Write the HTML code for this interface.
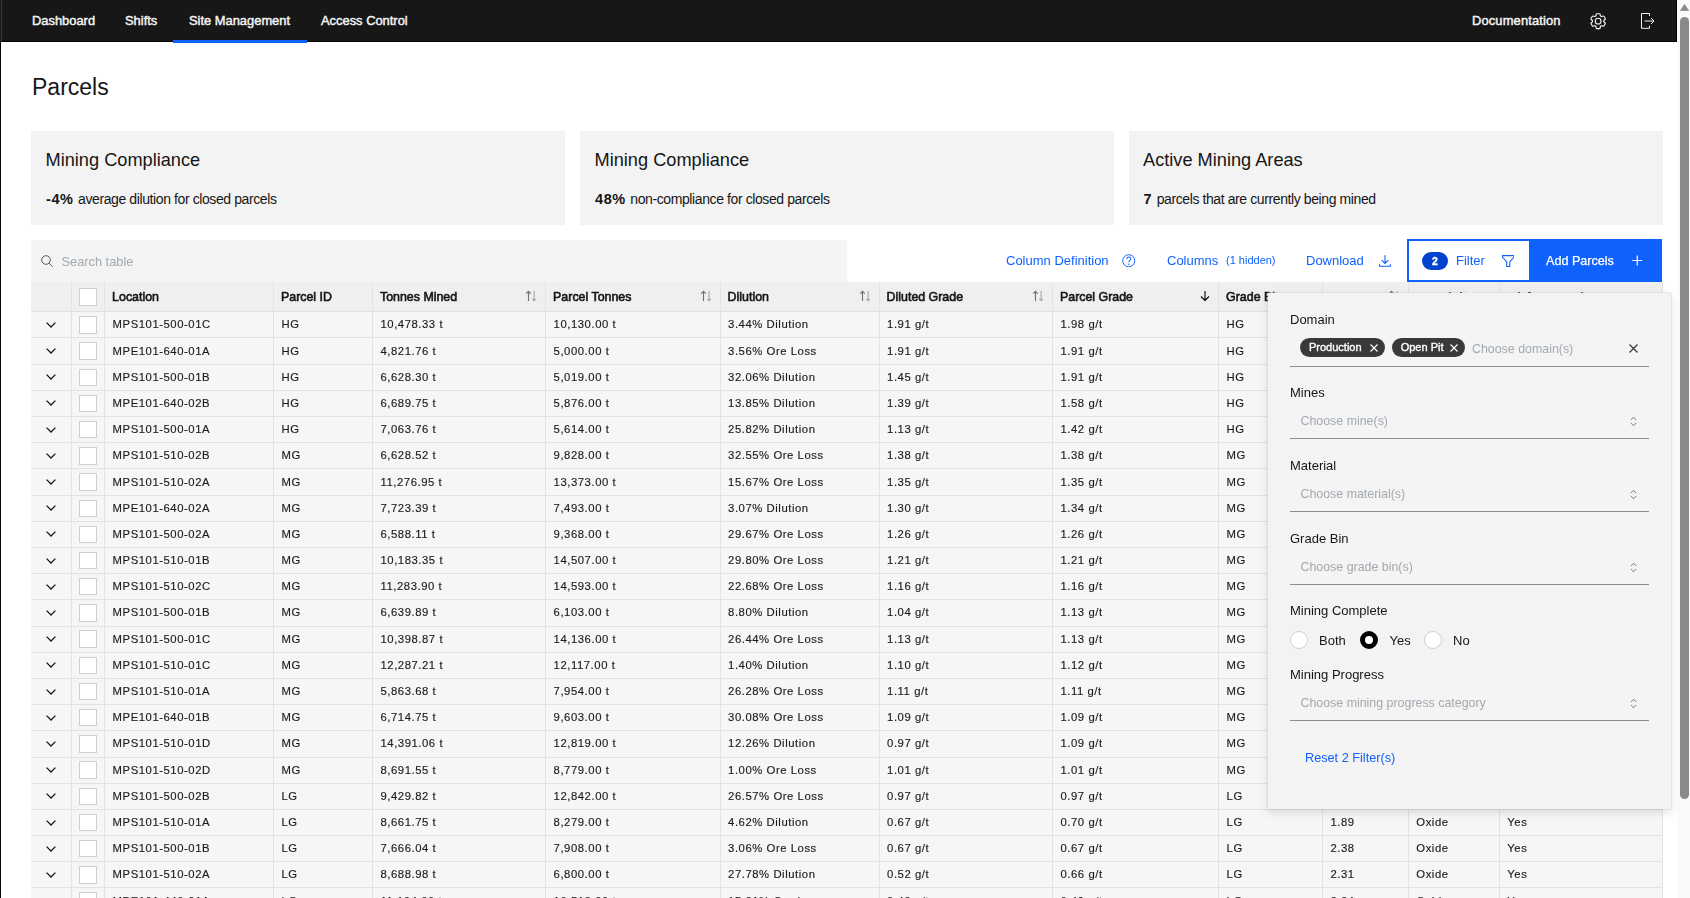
<!DOCTYPE html>
<html><head><meta charset="utf-8"><title>Parcels</title>
<style>
*{box-sizing:border-box;margin:0;padding:0}
html,body{width:1690px;height:898px;overflow:hidden;background:#fff;font-family:"Liberation Sans",sans-serif;color:#161616}
.abs,.vl,.hl,.th,.td,.cb,.chev,.sort,.thead,.tbody{position:absolute}
#leftline{position:absolute;left:0;top:41px;width:1px;height:857px;background:#060606;z-index:5}
#hdrleft{position:absolute;left:1px;top:0;width:1px;height:41px;background:#383838}
#hdrbot{position:absolute;left:0;top:41px;width:1677px;height:1px;background:#030303}
#hdr{position:absolute;left:0;top:0;width:1677px;height:42px;background:#171717}
#hdr .nav{position:absolute;top:0;height:42px;line-height:42px;font-size:12.9px;font-weight:400;-webkit-text-stroke:0.45px #f4f4f4;color:#f4f4f4;white-space:nowrap}
#underline{position:absolute;left:173px;top:39.5px;width:134px;height:3px;background:#0f62fe}
#hdrline{position:absolute;left:1676px;top:0;width:1px;height:42px;background:#000}
#sb{position:absolute;left:1677px;top:0;width:13px;height:898px;background:#fafafa}
#thumb{position:absolute;left:1680px;top:17px;width:9px;height:782px;background:#8a8a8a;border-radius:4.5px}
#title{position:absolute;left:32px;top:72px;font-size:23px;line-height:30px;white-space:nowrap}
.card{position:absolute;top:131px;height:94px;width:534px;background:#f3f3f3}
.card .t{position:absolute;left:14.5px;top:18px;font-size:18.2px;line-height:22px;white-space:nowrap}
.card .s{position:absolute;left:15px;top:59px;font-size:14px;letter-spacing:-0.4px;line-height:18px;white-space:nowrap}
.card .s b{font-weight:700;font-size:14.5px;letter-spacing:0.6px;margin-right:1px}
#search{position:absolute;left:31px;top:240px;width:816px;height:42px;background:#f4f4f4}
#search .ph{position:absolute;left:30.5px;top:13.7px;font-size:12.8px;line-height:16px;color:#a2a9b0}
.link{position:absolute;top:253px;font-size:13px;line-height:16px;color:#0f62fe;white-space:nowrap}
#filterbtn{position:absolute;left:1407px;top:239px;width:124px;height:43px;border:2px solid #0f62fe;background:#fff}
#badge{position:absolute;left:1422px;top:252px;width:26px;height:18px;border-radius:9px;background:#0043ce;color:#fff;font-size:10.5px;font-weight:700;-webkit-text-stroke:0.3px #fff;line-height:18.5px;text-align:center}
#addbtn{position:absolute;left:1529px;top:239px;width:133px;height:43px;background:#0f62fe}
.thead{background:#efefef}
.tbody{background:#f6f6f6}
.vl{width:1px;background:#e2e2e2}
.hl{height:1px;background:#e2e2e2}
.th{top:289px;font-size:12.4px;line-height:16px;font-weight:400;-webkit-text-stroke:0.6px #161616;color:#161616;white-space:nowrap}
.td{font-size:11.3px;letter-spacing:0.55px;line-height:16px;margin-top:-8px;color:#1c1c1c;-webkit-text-stroke:0.15px #1c1c1c;white-space:nowrap}
.cb{width:17.4px;height:17.4px;border:1px solid #c8d0d8;background:#fff}
.chev svg,.sort svg{display:block}
#panel{position:absolute;left:1267.5px;top:293px;width:403.5px;height:516px;background:#f3f3f3;box-shadow:0 0 0 0.5px rgba(190,200,212,0.6),0 3px 9px rgba(0,0,0,0.13);z-index:10}
.gl{position:absolute;left:0;top:0;width:1690px;height:898px;will-change:transform}
#caret{position:absolute;left:1467px;top:289.5px;width:0;height:0;border-left:3.5px solid transparent;border-right:3.5px solid transparent;border-bottom:4px solid #f1f1f1;z-index:11}
#panel .lbl{position:absolute;left:22.5px;font-size:13px;line-height:16px;color:#161616;font-weight:400;white-space:nowrap}
#panel .fld{position:absolute;left:22.5px;width:359px;height:36px;background:#f4f4f4;border-bottom:1px solid #8d8d8d}
#panel .fld .ph{position:absolute;left:10.5px;top:10px;font-size:12.4px;line-height:16px;color:#a2a9b0;white-space:nowrap}
#panel .fld .sel{position:absolute;left:340px;top:13px}
.tag{position:absolute;top:7px;height:19px;border-radius:9.5px;background:#393939;color:#fff;font-size:11px;font-weight:400;-webkit-text-stroke:0.35px #fff;line-height:19px;white-space:nowrap}
.radio{position:absolute;top:338px;width:18px;height:18px;border-radius:50%;border:1px solid #c8d0d8;background:#fff}
.radio.on{border:5px solid #000}
.rl{position:absolute;top:339.7px;font-size:13px;line-height:16px;color:#161616}
</style></head><body>
<div id="hdr">
  <div class="nav" style="left:32px">Dashboard</div>
  <div class="nav" style="left:125px">Shifts</div>
  <div class="nav" style="left:189px">Site Management</div>
  <div class="nav" style="left:321px">Access Control</div>
  <div class="nav" style="left:1472px;letter-spacing:0.15px">Documentation</div>
  <svg style="position:absolute;left:1588.85px;top:11.75px" width="18.3" height="18.3" viewBox="0 0 32 32"><path fill="#f4f4f4" d="M27,16.76c0-.25,0-.5,0-.76s0-.51,0-.77l1.92-1.68A2,2,0,0,0,29.3,11L26.94,7a2,2,0,0,0-1.73-1,2,2,0,0,0-.64.1l-2.43.82a11.35,11.35,0,0,0-1.310-.75l-.51-2.52a2,2,0,0,0-2-1.61H13.64a2,2,0,0,0-2,1.61l-.51,2.52a11.48,11.48,0,0,0-1.32.75L7.430,6.06A2,2,0,0,0,6.79,6,2,2,0,0,0,5.06,7L2.7,11a2,2,0,0,0,.41,2.51L5,15.24c0,.25,0,.5,0,.76s0,.51,0,.77L3.11,18.45A2,2,0,0,0,2.7,21L5.06,25a2,2,0,0,0,1.73,1,2,2,0,0,0,.64-.1l2.43-.82a11.35,11.35,0,0,0,1.31.75l.51,2.52a2,2,0,0,0,2,1.61h4.72a2,2,0,0,0,2-1.61l.51-2.52a11.48,11.48,0,0,0,1.32-.75l2.42.82a2,2,0,0,0,.64.1,2,2,0,0,0,1.73-1L29.3,21a2,2,0,0,0-.41-2.51ZM25.21,24l-3.43-1.16a8.86,8.86,0,0,1-2.71,1.57L18.36,28H13.64l-.71-3.55a9.36,9.36,0,0,1-2.7-1.57L6.79,24,4.43,20l2.72-2.4a8.9,8.9,0,0,1,0-3.130L4.43,12,6.79,8l3.43,1.16a8.86,8.86,0,0,1,2.71-1.57L13.64,4h4.72l.71,3.55a9.36,9.36,0,0,1,2.7,1.57L25.21,8,27.57,12l-2.72,2.4a8.9,8.9,0,0,1,0,3.13L27.57,20Z"/><path fill="#f4f4f4" d="M16,22a6,6,0,1,1,6-6A5.94,5.94,0,0,1,16,22Zm0-10a3.91,3.91,0,0,0-4,4,3.91,3.91,0,0,0,4,4,3.91,3.91,0,0,0,4-4A3.91,3.91,0,0,0,16,12Z"/></svg>
  <svg style="position:absolute;left:1640px;top:13px" width="16" height="16" viewBox="0 0 16 16"><path d="M9.5 0.5 H1.5 V15.3 H9.5 M9.5 0.5 V3 M9.5 15.3 V12.8" fill="none" stroke="#f4f4f4" stroke-width="1"/><path d="M4.5 8 H14 M11 5 L14 8 L11 11" fill="none" stroke="#f4f4f4" stroke-width="1"/></svg>
  <div id="hdrleft"></div><div id="hdrbot"></div>
  <div id="underline"></div>
  <div id="hdrline"></div>
</div>
<div id="leftline"></div>
<div id="sb"><svg style="position:absolute;left:3px;top:4px" width="9" height="7" viewBox="0 0 9 7"><path d="M4.5 0.3 L8.8 6.7 H0.2 Z" fill="#8a8a8a" stroke="#8a8a8a" stroke-width="0.5" stroke-linejoin="round"/></svg></div>
<div id="thumb"></div>

<div id="title">Parcels</div>
<div class="card" style="left:31px"><div class="t">Mining Compliance</div><div class="s"><b>-4%</b> average dilution for closed parcels</div></div>
<div class="card" style="left:580px"><div class="t">Mining Compliance</div><div class="s"><b>48%</b> non-compliance for closed parcels</div></div>
<div class="card" style="left:1128.5px"><div class="t">Active Mining Areas</div><div class="s"><b>7</b> parcels that are currently being mined</div></div>

<div class="gl">
<div id="search">
  <svg style="position:absolute;left:9.6px;top:14.6px" width="13" height="13" viewBox="0 0 13 13"><circle cx="5" cy="5" r="4.3" fill="none" stroke="#5a5a5a" stroke-width="1"/><path d="M8.1 8.1 L11.6 11.6" stroke="#5a5a5a" stroke-width="1"/></svg>
  <div class="ph">Search table</div>
</div>
<div class="link" style="left:1006px">Column Definition</div>
<svg style="position:absolute;left:1122.2px;top:253.8px" width="13.5" height="13.5" viewBox="0 0 14 14"><circle cx="7" cy="7" r="6.25" fill="none" stroke="#0f62fe" stroke-width="1"/><path d="M5 5.2 C5 3.6 6 3 7.1 3 C8.3 3 9.1 3.9 9.1 4.9 C9.1 6.3 7.1 6.5 7.1 8.6" fill="none" stroke="#0f62fe" stroke-width="1.05"/><circle cx="7.1" cy="10.6" r="0.75" fill="#0f62fe"/></svg>
<div class="link" style="left:1167px">Columns</div>
<div class="link" style="left:1226px;font-size:11px;top:251.5px">(1 hidden)</div>
<div class="link" style="left:1306px">Download</div>
<svg style="position:absolute;left:1378.5px;top:254.5px" width="12" height="12" viewBox="0 0 12 12"><path d="M6 0.3 V8.4 M2.7 5.1 L6 8.4 L9.3 5.1 M0.6 9.2 V11.3 H11.4 V9.2" fill="none" stroke="#0f62fe" stroke-width="1.1"/></svg>
<div id="filterbtn"></div>
<div id="badge">2</div>
<div class="link" style="left:1456px">Filter</div>
<svg style="position:absolute;left:1501.7px;top:254.7px" width="12.5" height="12.5" viewBox="0 0 12.5 12.5"><path d="M0.6 0.6 H11.9 V2.3 L7.8 6.6 V11.6 H4.7 V6.6 L0.6 2.3 Z" fill="none" stroke="#0f62fe" stroke-width="1.1"/></svg>
<div id="addbtn"></div>
<div class="link" style="left:1546px;color:#fff;font-size:12.6px;-webkit-text-stroke:0.25px #fff">Add Parcels</div>
<svg style="position:absolute;left:1631.5px;top:255px" width="11" height="11" viewBox="0 0 11 11"><path d="M5.25 0.5 V10.5 M0.25 5.5 H10.25" stroke="#fff" stroke-width="1.2"/></svg>

<div class="thead" style="left:31px;top:282px;width:1631.4px;height:29.80000000000001px"></div>
<div class="cb" style="left:79.2px;top:288.3px"></div><div class="th" style="left:112.1px">Location</div><div class="th" style="left:281.0px">Parcel ID</div><div class="th" style="left:380.0px">Tonnes Mined</div><div class="sort" style="left:525.0px;top:290px"><svg width="12" height="12" viewBox="0 0 12 12"><path d="M3.5 11 V1.3 M1.2 3.6 L3.5 1.3 L5.8 3.6" fill="none" stroke="#6f6f6f" stroke-width="1.1"/><path d="M9.1 1 V10.7 M7.3 8.9 L9.1 10.7 L10.9 8.9" fill="none" stroke="#a8a8a8" stroke-width="1.1"/></svg></div><div class="th" style="left:553.1px">Parcel Tonnes</div><div class="sort" style="left:699.5px;top:290px"><svg width="12" height="12" viewBox="0 0 12 12"><path d="M3.5 11 V1.3 M1.2 3.6 L3.5 1.3 L5.8 3.6" fill="none" stroke="#6f6f6f" stroke-width="1.1"/><path d="M9.1 1 V10.7 M7.3 8.9 L9.1 10.7 L10.9 8.9" fill="none" stroke="#a8a8a8" stroke-width="1.1"/></svg></div><div class="th" style="left:727.6px">Dilution</div><div class="sort" style="left:858.5px;top:290px"><svg width="12" height="12" viewBox="0 0 12 12"><path d="M3.5 11 V1.3 M1.2 3.6 L3.5 1.3 L5.8 3.6" fill="none" stroke="#6f6f6f" stroke-width="1.1"/><path d="M9.1 1 V10.7 M7.3 8.9 L9.1 10.7 L10.9 8.9" fill="none" stroke="#a8a8a8" stroke-width="1.1"/></svg></div><div class="th" style="left:886.6px">Diluted Grade</div><div class="sort" style="left:1031.9px;top:290px"><svg width="12" height="12" viewBox="0 0 12 12"><path d="M3.5 11 V1.3 M1.2 3.6 L3.5 1.3 L5.8 3.6" fill="none" stroke="#6f6f6f" stroke-width="1.1"/><path d="M9.1 1 V10.7 M7.3 8.9 L9.1 10.7 L10.9 8.9" fill="none" stroke="#a8a8a8" stroke-width="1.1"/></svg></div><div class="th" style="left:1060.0px">Parcel Grade</div><div class="sort" style="left:1200.0px;top:290px"><svg width="10" height="12" viewBox="0 0 10 12"><path d="M5 1 V10.5 M1 6.5 L5 10.5 L9 6.5" fill="none" stroke="#000" stroke-width="1.1"/></svg></div><div class="th" style="left:1226.1px">Grade Bin</div><div class="th" style="left:1330.0px"></div><div class="sort" style="left:1387.7px;top:290px"><svg width="12" height="12" viewBox="0 0 12 12"><path d="M3.5 11 V1.3 M1.2 3.6 L3.5 1.3 L5.8 3.6" fill="none" stroke="#6f6f6f" stroke-width="1.1"/><path d="M9.1 1 V10.7 M7.3 8.9 L9.1 10.7 L10.9 8.9" fill="none" stroke="#a8a8a8" stroke-width="1.1"/></svg></div><div class="th" style="left:1415.8px;top:290.5px">Material</div><div class="th" style="left:1506.8px;top:290.5px">Mining Complete</div>
<div class="vl" style="left:71.0px;top:282px;height:29.80000000000001px"></div>
<div class="vl" style="left:104.0px;top:282px;height:29.80000000000001px"></div>
<div class="vl" style="left:272.9px;top:282px;height:29.80000000000001px"></div>
<div class="vl" style="left:371.9px;top:282px;height:29.80000000000001px"></div>
<div class="vl" style="left:545.0px;top:282px;height:29.80000000000001px"></div>
<div class="vl" style="left:719.5px;top:282px;height:29.80000000000001px"></div>
<div class="vl" style="left:878.5px;top:282px;height:29.80000000000001px"></div>
<div class="vl" style="left:1051.9px;top:282px;height:29.80000000000001px"></div>
<div class="vl" style="left:1218.0px;top:282px;height:29.80000000000001px"></div>
<div class="vl" style="left:1321.9px;top:282px;height:29.80000000000001px"></div>
<div class="vl" style="left:1407.7px;top:282px;height:29.80000000000001px"></div>
<div class="vl" style="left:1498.7px;top:282px;height:29.80000000000001px"></div>
<div class="tbody" style="left:31px;top:311.8px;width:1631.4px;height:586.2px"></div>
<div class="hl" style="left:31px;top:311.3px;width:1631.4px;background:#dce1e6"></div>
<div class="hl" style="left:31px;top:337.49px;width:1631.4px"></div>
<div class="chev" style="left:46px;top:321.90000000000003px"><svg width="10" height="6" viewBox="0 0 10 6"><path d="M0.6 0.6 L5 5 L9.4 0.6" fill="none" stroke="#161616" stroke-width="1.3"/></svg></div>
<div class="cb" style="left:79.2px;top:316.2px"></div>
<div class="td" style="left:112.6px;top:324.40000000000003px">MPS101-500-01C</div>
<div class="td" style="left:281.5px;top:324.40000000000003px">HG</div>
<div class="td" style="left:380.5px;top:324.40000000000003px">10,478.33 t</div>
<div class="td" style="left:553.6px;top:324.40000000000003px">10,130.00 t</div>
<div class="td" style="left:728.1px;top:324.40000000000003px">3.44% Dilution</div>
<div class="td" style="left:887.1px;top:324.40000000000003px">1.91 g/t</div>
<div class="td" style="left:1060.5px;top:324.40000000000003px">1.98 g/t</div>
<div class="td" style="left:1226.6px;top:324.40000000000003px">HG</div>
<div class="td" style="left:1330.5px;top:324.40000000000003px">2.12</div>
<div class="td" style="left:1416.3px;top:324.40000000000003px">Oxide</div>
<div class="td" style="left:1507.3px;top:324.40000000000003px">No</div>
<div class="hl" style="left:31px;top:363.68px;width:1631.4px"></div>
<div class="chev" style="left:46px;top:348.09000000000003px"><svg width="10" height="6" viewBox="0 0 10 6"><path d="M0.6 0.6 L5 5 L9.4 0.6" fill="none" stroke="#161616" stroke-width="1.3"/></svg></div>
<div class="cb" style="left:79.2px;top:342.39px"></div>
<div class="td" style="left:112.6px;top:350.59000000000003px">MPE101-640-01A</div>
<div class="td" style="left:281.5px;top:350.59000000000003px">HG</div>
<div class="td" style="left:380.5px;top:350.59000000000003px">4,821.76 t</div>
<div class="td" style="left:553.6px;top:350.59000000000003px">5,000.00 t</div>
<div class="td" style="left:728.1px;top:350.59000000000003px">3.56% Ore Loss</div>
<div class="td" style="left:887.1px;top:350.59000000000003px">1.91 g/t</div>
<div class="td" style="left:1060.5px;top:350.59000000000003px">1.91 g/t</div>
<div class="td" style="left:1226.6px;top:350.59000000000003px">HG</div>
<div class="td" style="left:1330.5px;top:350.59000000000003px">2.10</div>
<div class="td" style="left:1416.3px;top:350.59000000000003px">Oxide</div>
<div class="td" style="left:1507.3px;top:350.59000000000003px">No</div>
<div class="hl" style="left:31px;top:389.87px;width:1631.4px"></div>
<div class="chev" style="left:46px;top:374.28000000000003px"><svg width="10" height="6" viewBox="0 0 10 6"><path d="M0.6 0.6 L5 5 L9.4 0.6" fill="none" stroke="#161616" stroke-width="1.3"/></svg></div>
<div class="cb" style="left:79.2px;top:368.58px"></div>
<div class="td" style="left:112.6px;top:376.78000000000003px">MPS101-500-01B</div>
<div class="td" style="left:281.5px;top:376.78000000000003px">HG</div>
<div class="td" style="left:380.5px;top:376.78000000000003px">6,628.30 t</div>
<div class="td" style="left:553.6px;top:376.78000000000003px">5,019.00 t</div>
<div class="td" style="left:728.1px;top:376.78000000000003px">32.06% Dilution</div>
<div class="td" style="left:887.1px;top:376.78000000000003px">1.45 g/t</div>
<div class="td" style="left:1060.5px;top:376.78000000000003px">1.91 g/t</div>
<div class="td" style="left:1226.6px;top:376.78000000000003px">HG</div>
<div class="td" style="left:1330.5px;top:376.78000000000003px">2.01</div>
<div class="td" style="left:1416.3px;top:376.78000000000003px">Oxide</div>
<div class="td" style="left:1507.3px;top:376.78000000000003px">Yes</div>
<div class="hl" style="left:31px;top:416.06px;width:1631.4px"></div>
<div class="chev" style="left:46px;top:400.47px"><svg width="10" height="6" viewBox="0 0 10 6"><path d="M0.6 0.6 L5 5 L9.4 0.6" fill="none" stroke="#161616" stroke-width="1.3"/></svg></div>
<div class="cb" style="left:79.2px;top:394.77px"></div>
<div class="td" style="left:112.6px;top:402.97px">MPE101-640-02B</div>
<div class="td" style="left:281.5px;top:402.97px">HG</div>
<div class="td" style="left:380.5px;top:402.97px">6,689.75 t</div>
<div class="td" style="left:553.6px;top:402.97px">5,876.00 t</div>
<div class="td" style="left:728.1px;top:402.97px">13.85% Dilution</div>
<div class="td" style="left:887.1px;top:402.97px">1.39 g/t</div>
<div class="td" style="left:1060.5px;top:402.97px">1.58 g/t</div>
<div class="td" style="left:1226.6px;top:402.97px">HG</div>
<div class="td" style="left:1330.5px;top:402.97px">1.95</div>
<div class="td" style="left:1416.3px;top:402.97px">Oxide</div>
<div class="td" style="left:1507.3px;top:402.97px">Yes</div>
<div class="hl" style="left:31px;top:442.25px;width:1631.4px"></div>
<div class="chev" style="left:46px;top:426.66px"><svg width="10" height="6" viewBox="0 0 10 6"><path d="M0.6 0.6 L5 5 L9.4 0.6" fill="none" stroke="#161616" stroke-width="1.3"/></svg></div>
<div class="cb" style="left:79.2px;top:420.96px"></div>
<div class="td" style="left:112.6px;top:429.16px">MPS101-500-01A</div>
<div class="td" style="left:281.5px;top:429.16px">HG</div>
<div class="td" style="left:380.5px;top:429.16px">7,063.76 t</div>
<div class="td" style="left:553.6px;top:429.16px">5,614.00 t</div>
<div class="td" style="left:728.1px;top:429.16px">25.82% Dilution</div>
<div class="td" style="left:887.1px;top:429.16px">1.13 g/t</div>
<div class="td" style="left:1060.5px;top:429.16px">1.42 g/t</div>
<div class="td" style="left:1226.6px;top:429.16px">HG</div>
<div class="td" style="left:1330.5px;top:429.16px">2.20</div>
<div class="td" style="left:1416.3px;top:429.16px">Oxide</div>
<div class="td" style="left:1507.3px;top:429.16px">Yes</div>
<div class="hl" style="left:31px;top:468.44px;width:1631.4px"></div>
<div class="chev" style="left:46px;top:452.85px"><svg width="10" height="6" viewBox="0 0 10 6"><path d="M0.6 0.6 L5 5 L9.4 0.6" fill="none" stroke="#161616" stroke-width="1.3"/></svg></div>
<div class="cb" style="left:79.2px;top:447.15px"></div>
<div class="td" style="left:112.6px;top:455.35px">MPS101-510-02B</div>
<div class="td" style="left:281.5px;top:455.35px">MG</div>
<div class="td" style="left:380.5px;top:455.35px">6,628.52 t</div>
<div class="td" style="left:553.6px;top:455.35px">9,828.00 t</div>
<div class="td" style="left:728.1px;top:455.35px">32.55% Ore Loss</div>
<div class="td" style="left:887.1px;top:455.35px">1.38 g/t</div>
<div class="td" style="left:1060.5px;top:455.35px">1.38 g/t</div>
<div class="td" style="left:1226.6px;top:455.35px">MG</div>
<div class="td" style="left:1330.5px;top:455.35px">2.05</div>
<div class="td" style="left:1416.3px;top:455.35px">Oxide</div>
<div class="td" style="left:1507.3px;top:455.35px">Yes</div>
<div class="hl" style="left:31px;top:494.63000000000005px;width:1631.4px"></div>
<div class="chev" style="left:46px;top:479.0400000000001px"><svg width="10" height="6" viewBox="0 0 10 6"><path d="M0.6 0.6 L5 5 L9.4 0.6" fill="none" stroke="#161616" stroke-width="1.3"/></svg></div>
<div class="cb" style="left:79.2px;top:473.34000000000003px"></div>
<div class="td" style="left:112.6px;top:481.5400000000001px">MPS101-510-02A</div>
<div class="td" style="left:281.5px;top:481.5400000000001px">MG</div>
<div class="td" style="left:380.5px;top:481.5400000000001px">11,276.95 t</div>
<div class="td" style="left:553.6px;top:481.5400000000001px">13,373.00 t</div>
<div class="td" style="left:728.1px;top:481.5400000000001px">15.67% Ore Loss</div>
<div class="td" style="left:887.1px;top:481.5400000000001px">1.35 g/t</div>
<div class="td" style="left:1060.5px;top:481.5400000000001px">1.35 g/t</div>
<div class="td" style="left:1226.6px;top:481.5400000000001px">MG</div>
<div class="td" style="left:1330.5px;top:481.5400000000001px">2.11</div>
<div class="td" style="left:1416.3px;top:481.5400000000001px">Oxide</div>
<div class="td" style="left:1507.3px;top:481.5400000000001px">Yes</div>
<div class="hl" style="left:31px;top:520.82px;width:1631.4px"></div>
<div class="chev" style="left:46px;top:505.23px"><svg width="10" height="6" viewBox="0 0 10 6"><path d="M0.6 0.6 L5 5 L9.4 0.6" fill="none" stroke="#161616" stroke-width="1.3"/></svg></div>
<div class="cb" style="left:79.2px;top:499.53px"></div>
<div class="td" style="left:112.6px;top:507.73px">MPE101-640-02A</div>
<div class="td" style="left:281.5px;top:507.73px">MG</div>
<div class="td" style="left:380.5px;top:507.73px">7,723.39 t</div>
<div class="td" style="left:553.6px;top:507.73px">7,493.00 t</div>
<div class="td" style="left:728.1px;top:507.73px">3.07% Dilution</div>
<div class="td" style="left:887.1px;top:507.73px">1.30 g/t</div>
<div class="td" style="left:1060.5px;top:507.73px">1.34 g/t</div>
<div class="td" style="left:1226.6px;top:507.73px">MG</div>
<div class="td" style="left:1330.5px;top:507.73px">1.98</div>
<div class="td" style="left:1416.3px;top:507.73px">Oxide</div>
<div class="td" style="left:1507.3px;top:507.73px">Yes</div>
<div class="hl" style="left:31px;top:547.0100000000001px;width:1631.4px"></div>
<div class="chev" style="left:46px;top:531.4200000000001px"><svg width="10" height="6" viewBox="0 0 10 6"><path d="M0.6 0.6 L5 5 L9.4 0.6" fill="none" stroke="#161616" stroke-width="1.3"/></svg></div>
<div class="cb" style="left:79.2px;top:525.72px"></div>
<div class="td" style="left:112.6px;top:533.9200000000001px">MPS101-500-02A</div>
<div class="td" style="left:281.5px;top:533.9200000000001px">MG</div>
<div class="td" style="left:380.5px;top:533.9200000000001px">6,588.11 t</div>
<div class="td" style="left:553.6px;top:533.9200000000001px">9,368.00 t</div>
<div class="td" style="left:728.1px;top:533.9200000000001px">29.67% Ore Loss</div>
<div class="td" style="left:887.1px;top:533.9200000000001px">1.26 g/t</div>
<div class="td" style="left:1060.5px;top:533.9200000000001px">1.26 g/t</div>
<div class="td" style="left:1226.6px;top:533.9200000000001px">MG</div>
<div class="td" style="left:1330.5px;top:533.9200000000001px">2.30</div>
<div class="td" style="left:1416.3px;top:533.9200000000001px">Oxide</div>
<div class="td" style="left:1507.3px;top:533.9200000000001px">Yes</div>
<div class="hl" style="left:31px;top:573.2px;width:1631.4px"></div>
<div class="chev" style="left:46px;top:557.61px"><svg width="10" height="6" viewBox="0 0 10 6"><path d="M0.6 0.6 L5 5 L9.4 0.6" fill="none" stroke="#161616" stroke-width="1.3"/></svg></div>
<div class="cb" style="left:79.2px;top:551.91px"></div>
<div class="td" style="left:112.6px;top:560.11px">MPS101-510-01B</div>
<div class="td" style="left:281.5px;top:560.11px">MG</div>
<div class="td" style="left:380.5px;top:560.11px">10,183.35 t</div>
<div class="td" style="left:553.6px;top:560.11px">14,507.00 t</div>
<div class="td" style="left:728.1px;top:560.11px">29.80% Ore Loss</div>
<div class="td" style="left:887.1px;top:560.11px">1.21 g/t</div>
<div class="td" style="left:1060.5px;top:560.11px">1.21 g/t</div>
<div class="td" style="left:1226.6px;top:560.11px">MG</div>
<div class="td" style="left:1330.5px;top:560.11px">2.22</div>
<div class="td" style="left:1416.3px;top:560.11px">Oxide</div>
<div class="td" style="left:1507.3px;top:560.11px">Yes</div>
<div class="hl" style="left:31px;top:599.3900000000001px;width:1631.4px"></div>
<div class="chev" style="left:46px;top:583.8000000000001px"><svg width="10" height="6" viewBox="0 0 10 6"><path d="M0.6 0.6 L5 5 L9.4 0.6" fill="none" stroke="#161616" stroke-width="1.3"/></svg></div>
<div class="cb" style="left:79.2px;top:578.1px"></div>
<div class="td" style="left:112.6px;top:586.3000000000001px">MPS101-510-02C</div>
<div class="td" style="left:281.5px;top:586.3000000000001px">MG</div>
<div class="td" style="left:380.5px;top:586.3000000000001px">11,283.90 t</div>
<div class="td" style="left:553.6px;top:586.3000000000001px">14,593.00 t</div>
<div class="td" style="left:728.1px;top:586.3000000000001px">22.68% Ore Loss</div>
<div class="td" style="left:887.1px;top:586.3000000000001px">1.16 g/t</div>
<div class="td" style="left:1060.5px;top:586.3000000000001px">1.16 g/t</div>
<div class="td" style="left:1226.6px;top:586.3000000000001px">MG</div>
<div class="td" style="left:1330.5px;top:586.3000000000001px">2.15</div>
<div class="td" style="left:1416.3px;top:586.3000000000001px">Oxide</div>
<div class="td" style="left:1507.3px;top:586.3000000000001px">Yes</div>
<div class="hl" style="left:31px;top:625.5800000000002px;width:1631.4px"></div>
<div class="chev" style="left:46px;top:609.9900000000001px"><svg width="10" height="6" viewBox="0 0 10 6"><path d="M0.6 0.6 L5 5 L9.4 0.6" fill="none" stroke="#161616" stroke-width="1.3"/></svg></div>
<div class="cb" style="left:79.2px;top:604.2900000000001px"></div>
<div class="td" style="left:112.6px;top:612.4900000000001px">MPS101-500-01B</div>
<div class="td" style="left:281.5px;top:612.4900000000001px">MG</div>
<div class="td" style="left:380.5px;top:612.4900000000001px">6,639.89 t</div>
<div class="td" style="left:553.6px;top:612.4900000000001px">6,103.00 t</div>
<div class="td" style="left:728.1px;top:612.4900000000001px">8.80% Dilution</div>
<div class="td" style="left:887.1px;top:612.4900000000001px">1.04 g/t</div>
<div class="td" style="left:1060.5px;top:612.4900000000001px">1.13 g/t</div>
<div class="td" style="left:1226.6px;top:612.4900000000001px">MG</div>
<div class="td" style="left:1330.5px;top:612.4900000000001px">2.08</div>
<div class="td" style="left:1416.3px;top:612.4900000000001px">Oxide</div>
<div class="td" style="left:1507.3px;top:612.4900000000001px">Yes</div>
<div class="hl" style="left:31px;top:651.7700000000001px;width:1631.4px"></div>
<div class="chev" style="left:46px;top:636.1800000000001px"><svg width="10" height="6" viewBox="0 0 10 6"><path d="M0.6 0.6 L5 5 L9.4 0.6" fill="none" stroke="#161616" stroke-width="1.3"/></svg></div>
<div class="cb" style="left:79.2px;top:630.48px"></div>
<div class="td" style="left:112.6px;top:638.6800000000001px">MPS101-500-01C</div>
<div class="td" style="left:281.5px;top:638.6800000000001px">MG</div>
<div class="td" style="left:380.5px;top:638.6800000000001px">10,398.87 t</div>
<div class="td" style="left:553.6px;top:638.6800000000001px">14,136.00 t</div>
<div class="td" style="left:728.1px;top:638.6800000000001px">26.44% Ore Loss</div>
<div class="td" style="left:887.1px;top:638.6800000000001px">1.13 g/t</div>
<div class="td" style="left:1060.5px;top:638.6800000000001px">1.13 g/t</div>
<div class="td" style="left:1226.6px;top:638.6800000000001px">MG</div>
<div class="td" style="left:1330.5px;top:638.6800000000001px">2.19</div>
<div class="td" style="left:1416.3px;top:638.6800000000001px">Oxide</div>
<div class="td" style="left:1507.3px;top:638.6800000000001px">Yes</div>
<div class="hl" style="left:31px;top:677.96px;width:1631.4px"></div>
<div class="chev" style="left:46px;top:662.37px"><svg width="10" height="6" viewBox="0 0 10 6"><path d="M0.6 0.6 L5 5 L9.4 0.6" fill="none" stroke="#161616" stroke-width="1.3"/></svg></div>
<div class="cb" style="left:79.2px;top:656.67px"></div>
<div class="td" style="left:112.6px;top:664.87px">MPS101-510-01C</div>
<div class="td" style="left:281.5px;top:664.87px">MG</div>
<div class="td" style="left:380.5px;top:664.87px">12,287.21 t</div>
<div class="td" style="left:553.6px;top:664.87px">12,117.00 t</div>
<div class="td" style="left:728.1px;top:664.87px">1.40% Dilution</div>
<div class="td" style="left:887.1px;top:664.87px">1.10 g/t</div>
<div class="td" style="left:1060.5px;top:664.87px">1.12 g/t</div>
<div class="td" style="left:1226.6px;top:664.87px">MG</div>
<div class="td" style="left:1330.5px;top:664.87px">2.02</div>
<div class="td" style="left:1416.3px;top:664.87px">Oxide</div>
<div class="td" style="left:1507.3px;top:664.87px">Yes</div>
<div class="hl" style="left:31px;top:704.1500000000001px;width:1631.4px"></div>
<div class="chev" style="left:46px;top:688.5600000000001px"><svg width="10" height="6" viewBox="0 0 10 6"><path d="M0.6 0.6 L5 5 L9.4 0.6" fill="none" stroke="#161616" stroke-width="1.3"/></svg></div>
<div class="cb" style="left:79.2px;top:682.86px"></div>
<div class="td" style="left:112.6px;top:691.0600000000001px">MPS101-510-01A</div>
<div class="td" style="left:281.5px;top:691.0600000000001px">MG</div>
<div class="td" style="left:380.5px;top:691.0600000000001px">5,863.68 t</div>
<div class="td" style="left:553.6px;top:691.0600000000001px">7,954.00 t</div>
<div class="td" style="left:728.1px;top:691.0600000000001px">26.28% Ore Loss</div>
<div class="td" style="left:887.1px;top:691.0600000000001px">1.11 g/t</div>
<div class="td" style="left:1060.5px;top:691.0600000000001px">1.11 g/t</div>
<div class="td" style="left:1226.6px;top:691.0600000000001px">MG</div>
<div class="td" style="left:1330.5px;top:691.0600000000001px">1.92</div>
<div class="td" style="left:1416.3px;top:691.0600000000001px">Oxide</div>
<div class="td" style="left:1507.3px;top:691.0600000000001px">Yes</div>
<div class="hl" style="left:31px;top:730.3400000000001px;width:1631.4px"></div>
<div class="chev" style="left:46px;top:714.7500000000001px"><svg width="10" height="6" viewBox="0 0 10 6"><path d="M0.6 0.6 L5 5 L9.4 0.6" fill="none" stroke="#161616" stroke-width="1.3"/></svg></div>
<div class="cb" style="left:79.2px;top:709.0500000000001px"></div>
<div class="td" style="left:112.6px;top:717.2500000000001px">MPE101-640-01B</div>
<div class="td" style="left:281.5px;top:717.2500000000001px">MG</div>
<div class="td" style="left:380.5px;top:717.2500000000001px">6,714.75 t</div>
<div class="td" style="left:553.6px;top:717.2500000000001px">9,603.00 t</div>
<div class="td" style="left:728.1px;top:717.2500000000001px">30.08% Ore Loss</div>
<div class="td" style="left:887.1px;top:717.2500000000001px">1.09 g/t</div>
<div class="td" style="left:1060.5px;top:717.2500000000001px">1.09 g/t</div>
<div class="td" style="left:1226.6px;top:717.2500000000001px">MG</div>
<div class="td" style="left:1330.5px;top:717.2500000000001px">2.27</div>
<div class="td" style="left:1416.3px;top:717.2500000000001px">Oxide</div>
<div class="td" style="left:1507.3px;top:717.2500000000001px">Yes</div>
<div class="hl" style="left:31px;top:756.5300000000001px;width:1631.4px"></div>
<div class="chev" style="left:46px;top:740.94px"><svg width="10" height="6" viewBox="0 0 10 6"><path d="M0.6 0.6 L5 5 L9.4 0.6" fill="none" stroke="#161616" stroke-width="1.3"/></svg></div>
<div class="cb" style="left:79.2px;top:735.24px"></div>
<div class="td" style="left:112.6px;top:743.44px">MPS101-510-01D</div>
<div class="td" style="left:281.5px;top:743.44px">MG</div>
<div class="td" style="left:380.5px;top:743.44px">14,391.06 t</div>
<div class="td" style="left:553.6px;top:743.44px">12,819.00 t</div>
<div class="td" style="left:728.1px;top:743.44px">12.26% Dilution</div>
<div class="td" style="left:887.1px;top:743.44px">0.97 g/t</div>
<div class="td" style="left:1060.5px;top:743.44px">1.09 g/t</div>
<div class="td" style="left:1226.6px;top:743.44px">MG</div>
<div class="td" style="left:1330.5px;top:743.44px">2.14</div>
<div class="td" style="left:1416.3px;top:743.44px">Oxide</div>
<div class="td" style="left:1507.3px;top:743.44px">Yes</div>
<div class="hl" style="left:31px;top:782.72px;width:1631.4px"></div>
<div class="chev" style="left:46px;top:767.13px"><svg width="10" height="6" viewBox="0 0 10 6"><path d="M0.6 0.6 L5 5 L9.4 0.6" fill="none" stroke="#161616" stroke-width="1.3"/></svg></div>
<div class="cb" style="left:79.2px;top:761.43px"></div>
<div class="td" style="left:112.6px;top:769.63px">MPS101-510-02D</div>
<div class="td" style="left:281.5px;top:769.63px">MG</div>
<div class="td" style="left:380.5px;top:769.63px">8,691.55 t</div>
<div class="td" style="left:553.6px;top:769.63px">8,779.00 t</div>
<div class="td" style="left:728.1px;top:769.63px">1.00% Ore Loss</div>
<div class="td" style="left:887.1px;top:769.63px">1.01 g/t</div>
<div class="td" style="left:1060.5px;top:769.63px">1.01 g/t</div>
<div class="td" style="left:1226.6px;top:769.63px">MG</div>
<div class="td" style="left:1330.5px;top:769.63px">2.06</div>
<div class="td" style="left:1416.3px;top:769.63px">Oxide</div>
<div class="td" style="left:1507.3px;top:769.63px">Yes</div>
<div class="hl" style="left:31px;top:808.9100000000001px;width:1631.4px"></div>
<div class="chev" style="left:46px;top:793.32px"><svg width="10" height="6" viewBox="0 0 10 6"><path d="M0.6 0.6 L5 5 L9.4 0.6" fill="none" stroke="#161616" stroke-width="1.3"/></svg></div>
<div class="cb" style="left:79.2px;top:787.62px"></div>
<div class="td" style="left:112.6px;top:795.82px">MPS101-500-02B</div>
<div class="td" style="left:281.5px;top:795.82px">LG</div>
<div class="td" style="left:380.5px;top:795.82px">9,429.82 t</div>
<div class="td" style="left:553.6px;top:795.82px">12,842.00 t</div>
<div class="td" style="left:728.1px;top:795.82px">26.57% Ore Loss</div>
<div class="td" style="left:887.1px;top:795.82px">0.97 g/t</div>
<div class="td" style="left:1060.5px;top:795.82px">0.97 g/t</div>
<div class="td" style="left:1226.6px;top:795.82px">LG</div>
<div class="td" style="left:1330.5px;top:795.82px">2.33</div>
<div class="td" style="left:1416.3px;top:795.82px">Oxide</div>
<div class="td" style="left:1507.3px;top:795.82px">Yes</div>
<div class="hl" style="left:31px;top:835.1000000000001px;width:1631.4px"></div>
<div class="chev" style="left:46px;top:819.5100000000001px"><svg width="10" height="6" viewBox="0 0 10 6"><path d="M0.6 0.6 L5 5 L9.4 0.6" fill="none" stroke="#161616" stroke-width="1.3"/></svg></div>
<div class="cb" style="left:79.2px;top:813.8100000000001px"></div>
<div class="td" style="left:112.6px;top:822.0100000000001px">MPS101-510-01A</div>
<div class="td" style="left:281.5px;top:822.0100000000001px">LG</div>
<div class="td" style="left:380.5px;top:822.0100000000001px">8,661.75 t</div>
<div class="td" style="left:553.6px;top:822.0100000000001px">8,279.00 t</div>
<div class="td" style="left:728.1px;top:822.0100000000001px">4.62% Dilution</div>
<div class="td" style="left:887.1px;top:822.0100000000001px">0.67 g/t</div>
<div class="td" style="left:1060.5px;top:822.0100000000001px">0.70 g/t</div>
<div class="td" style="left:1226.6px;top:822.0100000000001px">LG</div>
<div class="td" style="left:1330.5px;top:822.0100000000001px">1.89</div>
<div class="td" style="left:1416.3px;top:822.0100000000001px">Oxide</div>
<div class="td" style="left:1507.3px;top:822.0100000000001px">Yes</div>
<div class="hl" style="left:31px;top:861.2900000000002px;width:1631.4px"></div>
<div class="chev" style="left:46px;top:845.7000000000002px"><svg width="10" height="6" viewBox="0 0 10 6"><path d="M0.6 0.6 L5 5 L9.4 0.6" fill="none" stroke="#161616" stroke-width="1.3"/></svg></div>
<div class="cb" style="left:79.2px;top:840.0000000000001px"></div>
<div class="td" style="left:112.6px;top:848.2000000000002px">MPS101-500-01B</div>
<div class="td" style="left:281.5px;top:848.2000000000002px">LG</div>
<div class="td" style="left:380.5px;top:848.2000000000002px">7,666.04 t</div>
<div class="td" style="left:553.6px;top:848.2000000000002px">7,908.00 t</div>
<div class="td" style="left:728.1px;top:848.2000000000002px">3.06% Ore Loss</div>
<div class="td" style="left:887.1px;top:848.2000000000002px">0.67 g/t</div>
<div class="td" style="left:1060.5px;top:848.2000000000002px">0.67 g/t</div>
<div class="td" style="left:1226.6px;top:848.2000000000002px">LG</div>
<div class="td" style="left:1330.5px;top:848.2000000000002px">2.38</div>
<div class="td" style="left:1416.3px;top:848.2000000000002px">Oxide</div>
<div class="td" style="left:1507.3px;top:848.2000000000002px">Yes</div>
<div class="hl" style="left:31px;top:887.48px;width:1631.4px"></div>
<div class="chev" style="left:46px;top:871.89px"><svg width="10" height="6" viewBox="0 0 10 6"><path d="M0.6 0.6 L5 5 L9.4 0.6" fill="none" stroke="#161616" stroke-width="1.3"/></svg></div>
<div class="cb" style="left:79.2px;top:866.1899999999999px"></div>
<div class="td" style="left:112.6px;top:874.39px">MPS101-510-02A</div>
<div class="td" style="left:281.5px;top:874.39px">LG</div>
<div class="td" style="left:380.5px;top:874.39px">8,688.98 t</div>
<div class="td" style="left:553.6px;top:874.39px">6,800.00 t</div>
<div class="td" style="left:728.1px;top:874.39px">27.78% Dilution</div>
<div class="td" style="left:887.1px;top:874.39px">0.52 g/t</div>
<div class="td" style="left:1060.5px;top:874.39px">0.66 g/t</div>
<div class="td" style="left:1226.6px;top:874.39px">LG</div>
<div class="td" style="left:1330.5px;top:874.39px">2.31</div>
<div class="td" style="left:1416.3px;top:874.39px">Oxide</div>
<div class="td" style="left:1507.3px;top:874.39px">Yes</div>
<div class="hl" style="left:31px;top:913.6700000000001px;width:1631.4px"></div>
<div class="chev" style="left:46px;top:898.08px"><svg width="10" height="6" viewBox="0 0 10 6"><path d="M0.6 0.6 L5 5 L9.4 0.6" fill="none" stroke="#161616" stroke-width="1.3"/></svg></div>
<div class="cb" style="left:79.2px;top:892.38px"></div>
<div class="td" style="left:112.6px;top:900.58px">MPE101-440-01A</div>
<div class="td" style="left:281.5px;top:900.58px">LG</div>
<div class="td" style="left:380.5px;top:900.58px">11,104.00 t</div>
<div class="td" style="left:553.6px;top:900.58px">10,513.00 t</div>
<div class="td" style="left:728.1px;top:900.58px">15.21% Ore Loss</div>
<div class="td" style="left:887.1px;top:900.58px">0.49 g/t</div>
<div class="td" style="left:1060.5px;top:900.58px">0.49 g/t</div>
<div class="td" style="left:1226.6px;top:900.58px">LG</div>
<div class="td" style="left:1330.5px;top:900.58px">2.24</div>
<div class="td" style="left:1416.3px;top:900.58px">Oxide</div>
<div class="td" style="left:1507.3px;top:900.58px">Yes</div>
<div class="vl" style="left:71.0px;top:311.8px;height:586.2px"></div>
<div class="vl" style="left:104.0px;top:311.8px;height:586.2px"></div>
<div class="vl" style="left:272.9px;top:311.8px;height:586.2px"></div>
<div class="vl" style="left:371.9px;top:311.8px;height:586.2px"></div>
<div class="vl" style="left:545.0px;top:311.8px;height:586.2px"></div>
<div class="vl" style="left:719.5px;top:311.8px;height:586.2px"></div>
<div class="vl" style="left:878.5px;top:311.8px;height:586.2px"></div>
<div class="vl" style="left:1051.9px;top:311.8px;height:586.2px"></div>
<div class="vl" style="left:1218.0px;top:311.8px;height:586.2px"></div>
<div class="vl" style="left:1321.9px;top:311.8px;height:586.2px"></div>
<div class="vl" style="left:1407.7px;top:311.8px;height:586.2px"></div>
<div class="vl" style="left:1498.7px;top:311.8px;height:586.2px"></div>
<div class="vl" style="left:1661.9px;top:282px;height:616px"></div>
<div style="position:absolute;left:1449.3000000000002px;top:291.9px;width:2.2px;height:1.1px;border-radius:1px;background:#161616"></div><div style="position:absolute;left:1459.7px;top:291.9px;width:2.2px;height:1.1px;border-radius:1px;background:#161616"></div><div style="position:absolute;left:1518.0px;top:291.9px;width:2.2px;height:1.1px;border-radius:1px;background:#161616"></div><div style="position:absolute;left:1528.4px;top:291.9px;width:2.2px;height:1.1px;border-radius:1px;background:#161616"></div><div style="position:absolute;left:1580.9px;top:291.9px;width:2.2px;height:1.1px;border-radius:1px;background:#161616"></div>

<div id="caret"></div>
<div id="panel">
  <div class="lbl" style="top:18.5px">Domain</div>
  <div class="fld" style="top:38px;height:36px">
    <div class="tag" style="left:10px;width:85px"><span style="position:absolute;left:9px">Production</span><svg style="position:absolute;left:69.5px;top:6px" width="8" height="8" viewBox="0 0 8 8"><path d="M0.5 0.5 L7.5 7.5 M7.5 0.5 L0.5 7.5" stroke="#fff" stroke-width="1.1"/></svg></div>
    <div class="tag" style="left:102px;width:73px"><span style="position:absolute;left:8.7px">Open Pit</span><svg style="position:absolute;left:57.5px;top:6px" width="8" height="8" viewBox="0 0 8 8"><path d="M0.5 0.5 L7.5 7.5 M7.5 0.5 L0.5 7.5" stroke="#fff" stroke-width="1.1"/></svg></div>
    <div class="ph" style="left:182px">Choose domain(s)</div>
    <svg style="position:absolute;left:339px;top:13px" width="9" height="9" viewBox="0 0 9 9"><path d="M0.5 0.5 L8.5 8.5 M8.5 0.5 L0.5 8.5" stroke="#393939" stroke-width="1.2"/></svg>
  </div>
  <div class="lbl" style="top:91.8px">Mines</div>
  <div class="fld" style="top:110px"><div class="ph">Choose mine(s)</div><svg class="sel" width="7" height="11" viewBox="0 0 7 11"><path d="M0.8 4 L3.5 1.3 L6.2 4 M0.8 7 L3.5 9.7 L6.2 7" fill="none" stroke="#6f7880" stroke-width="1"/></svg></div>
  <div class="lbl" style="top:165px">Material</div>
  <div class="fld" style="top:183px"><div class="ph">Choose material(s)</div><svg class="sel" width="7" height="11" viewBox="0 0 7 11"><path d="M0.8 4 L3.5 1.3 L6.2 4 M0.8 7 L3.5 9.7 L6.2 7" fill="none" stroke="#6f7880" stroke-width="1"/></svg></div>
  <div class="lbl" style="top:238px">Grade Bin</div>
  <div class="fld" style="top:256px"><div class="ph">Choose grade bin(s)</div><svg class="sel" width="7" height="11" viewBox="0 0 7 11"><path d="M0.8 4 L3.5 1.3 L6.2 4 M0.8 7 L3.5 9.7 L6.2 7" fill="none" stroke="#6f7880" stroke-width="1"/></svg></div>
  <div class="lbl" style="top:309.5px">Mining Complete</div>
  <div class="radio" style="left:22.5px"></div><div class="rl" style="left:51.5px">Both</div>
  <div class="radio on" style="left:92.5px"></div><div class="rl" style="left:122px">Yes</div>
  <div class="radio" style="left:156.5px"></div><div class="rl" style="left:185.5px">No</div>
  <div class="lbl" style="top:374px">Mining Progress</div>
  <div class="fld" style="top:392px"><div class="ph">Choose mining progress category</div><svg class="sel" width="7" height="11" viewBox="0 0 7 11"><path d="M0.8 4 L3.5 1.3 L6.2 4 M0.8 7 L3.5 9.7 L6.2 7" fill="none" stroke="#6f7880" stroke-width="1"/></svg></div>
  <div class="lbl" style="top:456.5px;left:37.5px;font-size:12.7px;color:#0f62fe">Reset 2 Filter(s)</div>
</div>
</div>
</body></html>
